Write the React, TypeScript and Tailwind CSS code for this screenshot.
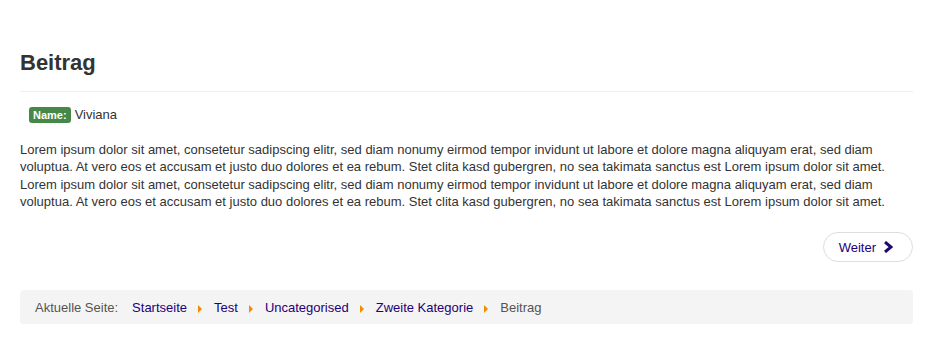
import React from "react";

const para =
  "Lorem ipsum dolor sit amet, consetetur sadipscing elitr, sed diam nonumy eirmod tempor invidunt ut labore et dolore magna aliquyam erat, sed diam voluptua. At vero eos et accusam et justo duo dolores et ea rebum. Stet clita kasd gubergren, no sea takimata sanctus est Lorem ipsum dolor sit amet.";

function Sep() {
  return (
    <span className="ml-[11px] mr-[12px] inline-block h-0 w-0 border-y-[4px] border-l-[4px] border-y-transparent border-l-[#f08c00] align-middle translate-y-[2px]" />
  );
}

export default function App() {
  return (
    <div
      className="min-h-[358px] bg-white px-[20px] pt-[49px] text-[#333]"
      style={{ fontFamily: '"Liberation Sans", Arial, sans-serif' }}
    >
      <div className="w-[893px]">
        <h1 className="text-[22px] font-bold leading-[28px] text-[#333]">Beitrag</h1>
        <div className="mt-[14px] border-t border-[#eeeeee]" />
        <div className="mt-[14px] flex items-center pl-[9px]">
          <span className="rounded-[3px] bg-[#468847] px-[4px] py-[1px] text-[11px] font-bold leading-[14px] text-white">
            Name:
          </span>
          <span className="ml-[4px] text-[13px] leading-[17px]">Viviana</span>
        </div>
        <p className="mt-[18px] text-[13px] leading-[17.33px] text-[#333]">
          {para} {para}
        </p>
        <div className="mt-[22px] flex justify-end">
          <button className="flex h-[30px] items-center gap-[7px] rounded-full border border-[#dddddd] bg-white pl-[15px] pr-[19px] text-[13px] text-[#22007a]">
            Weiter
            <svg width="10" height="12" viewBox="0 0 10 12">
              <path d="M2 1 L8 6 L2 11" fill="none" stroke="#1e0a6e" strokeWidth="3" strokeLinejoin="miter" />
            </svg>
          </button>
        </div>
        <div className="mt-[28px] flex h-[34px] items-center rounded-[4px] bg-[#f4f4f4] px-[15px] text-[13px]">
          <span className="mr-[14px] text-[#555]">Aktuelle Seite:</span>
          <a className="text-[#22007a]">Startseite</a>
          <Sep />
          <a className="text-[#22007a]">Test</a>
          <Sep />
          <a className="text-[#22007a]">Uncategorised</a>
          <Sep />
          <a className="text-[#22007a]">Zweite Kategorie</a>
          <Sep />
          <span className="text-[#555]">Beitrag</span>
        </div>
      </div>
    </div>
  );
}
